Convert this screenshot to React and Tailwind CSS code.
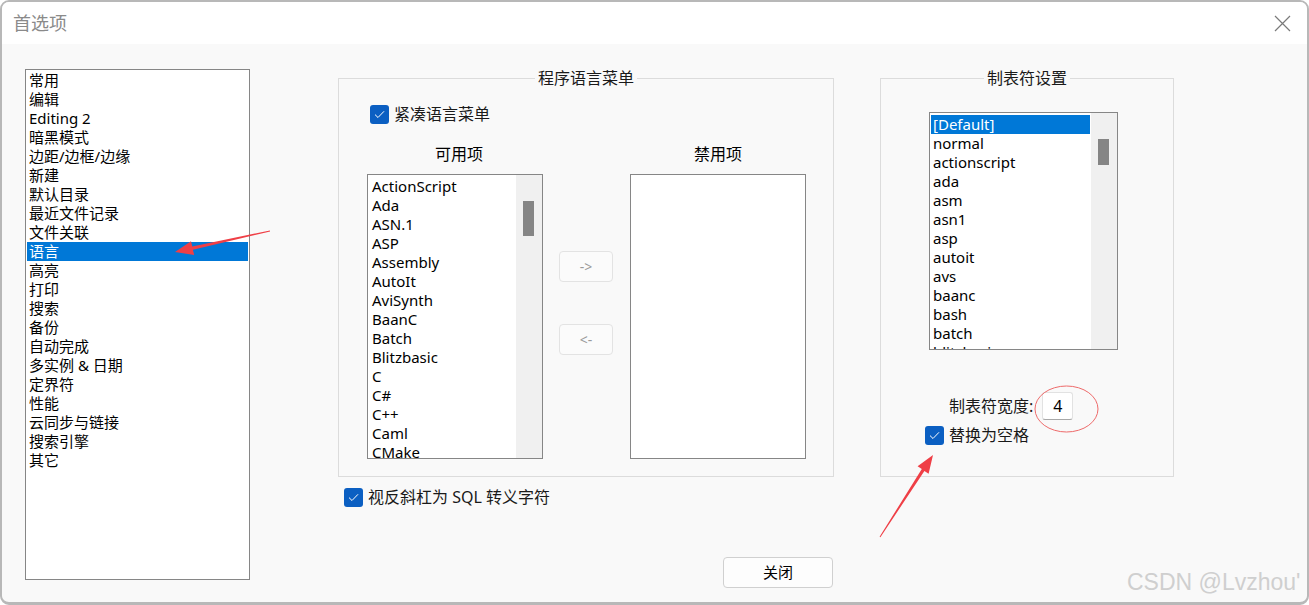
import React from "react";

const FONT = { fontFamily: '"Noto Sans", "Noto Sans CJK SC", sans-serif' };

const categories = [
  "常用", "编辑", "Editing 2", "暗黑模式", "边距/边框/边缘", "新建", "默认目录",
  "最近文件记录", "文件关联", "语言", "高亮", "打印", "搜索", "备份", "自动完成",
  "多实例 & 日期", "定界符", "性能", "云同步与链接", "搜索引擎", "其它",
];

const languages = [
  "ActionScript", "Ada", "ASN.1", "ASP", "Assembly", "AutoIt", "AviSynth", "BaanC",
  "Batch", "Blitzbasic", "C", "C#", "C++", "Caml", "CMake",
];

const tabLangs = [
  "[Default]", "normal", "actionscript", "ada", "asm", "asn1", "asp", "autoit",
  "avs", "baanc", "bash", "batch", "blitzbasic",
];

const Check = ({ label }) => (
  <div className="flex items-center gap-[5px] h-[20px]">
    <span className="w-[19px] h-[19px] rounded-[3px] bg-[#0b5fc2] flex items-center justify-center">
      <svg width="11" height="9" viewBox="0 0 11 9">
        <path d="M1 4.6 L4 7.5 L10 1.3" fill="none" stroke="#ffffff" strokeWidth="1" />
      </svg>
    </span>
    <span className="text-[16px] leading-[20px] text-[#1a1a1a]">{label}</span>
  </div>
);

// listbox with classic scrollbar
const ListBox = ({ items, selected, width, height, thumbH, itemPad }) => (
  <div className={`${width} ${height} border border-[#868686] bg-white flex overflow-hidden`}>
    <div className="flex-1 pt-[2px] px-[1px] overflow-hidden">
      {items.map((it, i) => (
        <div
          key={it}
          className={`h-[19px] leading-[19px] ${itemPad} text-[15px] whitespace-nowrap ${
            i === selected ? "bg-[#0078d7] text-white" : "text-black"
          }`}
        >
          {it}
        </div>
      ))}
    </div>
    <div className="w-[26px] bg-[#f0f0f0] pt-[26px] pl-[7px]">
      <div className={`w-[11px] ${thumbH} bg-[#858585]`} />
    </div>
  </div>
);

const SmallBtn = ({ children }) => (
  <div className="w-[54px] h-[31px] border border-[#e3e3e3] rounded-[4px] bg-[#fbfbfb] flex items-center justify-center text-[14px] text-[#9a9a9a]">
    {children}
  </div>
);

export default function App() {
  return (
    <div className="relative w-[1309px] h-[605px] overflow-hidden bg-white" style={FONT}>
      <div className="w-full h-full flex flex-col bg-[#f9f9f9] border-2 border-b-[3px] border-[#b8b8b8] rounded-[9px] overflow-hidden">
        {/* title bar */}
        <div className="h-[42px] bg-white flex items-center justify-between pl-[11px] pr-[16px] shrink-0">
          <span className="text-[18px] text-[#8a8a8a]">首选项</span>
          <svg width="17" height="17" viewBox="0 0 17 17">
            <path d="M1 1 L16 16 M16 1 L1 16" stroke="#7a7a7a" strokeWidth="1.2" />
          </svg>
        </div>

        {/* body */}
        <div className="flex pl-[23px] pt-[25px]">
          {/* category list */}
          <div className="w-[225px] h-[511px] border border-[#868686] bg-white p-[1px]">
            {categories.map((c, i) => (
              <div
                key={c}
                className={`h-[19px] leading-[19px] pl-[2px] text-[15px] ${
                  i === 9 ? "bg-[#0078d7] text-white" : "text-black"
                }`}
              >
                {c}
              </div>
            ))}
          </div>

          <div className="ml-[88px] -mt-[1px] flex flex-col">
            <div className="flex gap-[46px] items-start">
              {/* 程序语言菜单 */}
              <fieldset className="w-[496px] h-[409px] border border-[#dcdcdc]">
                <legend className="mx-auto px-[3px] text-[16px] leading-[20px] text-[#1a1a1a]">程序语言菜单</legend>
                <div className="pl-[31px] mt-[16px]">
                  <Check label="紧凑语言菜单" />
                </div>
                <div className="flex items-start pl-[28px] mt-[20px]">
                  <div className="flex flex-col">
                    <div className="text-center text-[16px] leading-[20px] mb-[10px] pl-[8px]">可用项</div>
                    <ListBox items={languages} selected={-1} width="w-[176px]" height="h-[285px]" thumbH="h-[35px]" itemPad="pl-[3px]" />
                  </div>
                  <div className="flex flex-col gap-[42px] pt-[107px] ml-[16px] mr-[17px]">
                    <SmallBtn>-&gt;</SmallBtn>
                    <SmallBtn>&lt;-</SmallBtn>
                  </div>
                  <div className="flex flex-col">
                    <div className="text-center text-[16px] leading-[20px] mb-[10px]">禁用项</div>
                    <div className="w-[176px] h-[285px] border border-[#868686] bg-white" />
                  </div>
                </div>
              </fieldset>

              {/* 制表符设置 */}
              <fieldset className="w-[294px] h-[409px] border border-[#dcdcdc]">
                <legend className="mx-auto px-[3px] text-[16px] leading-[20px] text-[#1a1a1a]">制表符设置</legend>
                <div className="pl-[48px] mt-[24px]">
                  <ListBox items={tabLangs} selected={0} width="w-[189px]" height="h-[238px]" thumbH="h-[26px]" itemPad="pl-[2px]" />
                </div>
                <div className="flex items-center gap-[9px] pl-[68px] mt-[42px]">
                  <span className="text-[16px] leading-[20px] text-[#1a1a1a]">制表符宽度:</span>
                  <div className="w-[31px] h-[28px] bg-white border border-[#e2e2e2] border-b-[#a8a8a8] rounded-[3px] flex items-center justify-center text-[16px] text-black">
                    4
                  </div>
                </div>
                <div className="pl-[44px] mt-[5px]">
                  <Check label="替换为空格" />
                </div>
              </fieldset>
            </div>

            <div className="ml-[6px] mt-[10px]">
              <Check label="视反斜杠为 SQL 转义字符" />
            </div>

            <div className="ml-[385px] mt-[50px] w-[110px] h-[31px] border border-[#d0d0d0] rounded-[4px] bg-[#fdfdfd] flex items-center justify-center text-[15px] text-black">
              关闭
            </div>
          </div>
        </div>
      </div>

      {/* annotations */}
      <svg className="absolute inset-0 pointer-events-none" width="1309" height="605">
        <polygon
          points="270.1,231.5 192.9,249.7 194.2,255 175,252 191,241.2 192.3,246.5 269.9,230.5"
          fill="#ef3f46"
        />
        <polygon
          points="880.4,537.3 924.4,470.9 928.6,473.8 933,455 917.6,466.2 921.8,469.1 879.6,536.7"
          fill="#ef3f46"
        />
        <ellipse cx="1066.5" cy="409" rx="31.5" ry="23" fill="none" stroke="#ee6b6b" strokeWidth="1" />
      </svg>
      <div
        className="absolute left-[1127px] top-[568px] text-[23px] leading-[28px] text-[#cfcfcf] tracking-[0px]"
        style={{ fontFamily: '"Liberation Sans", Arial, sans-serif' }}
      >
        CSDN @Lvzhou'
      </div>
    </div>
  );
}
